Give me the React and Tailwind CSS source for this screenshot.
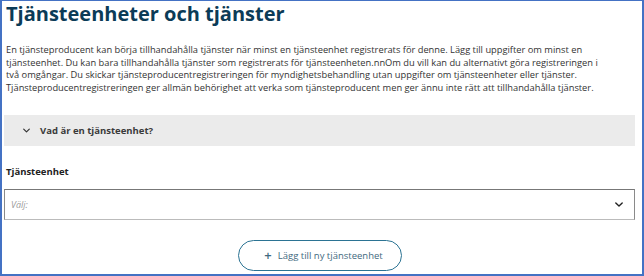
import React from "react";

function ChevronDown({ className, w = 1.4 }) {
  return (
    <svg className={className} viewBox="0 0 10 6" fill="none">
      <path d="M1 1l4 4 4-4" stroke="currentColor" strokeWidth={w} strokeLinecap="round" strokeLinejoin="round" />
    </svg>
  );
}

export default function App() {
  return (
    <div className="w-[644px] h-[276px] bg-white border-[#4472c4] border-l-2 border-r-2 border-t border-b-2 overflow-hidden font-['Open_Sans',sans-serif]">
      <div className="pl-[2px] pr-[7px]">
        <h1 className="pl-[2px] text-[20px] font-bold leading-[26px] text-[#0b3b57]">Tjänsteenheter och tjänster</h1>
        <p className="mt-[17px] pl-[2px] text-[9.3px] leading-[12.6px] text-[#333333] whitespace-nowrap">
          <span className="block">En tjänsteproducent kan börja tillhandahålla tjänster när minst en tjänsteenhet registrerats för denne. Lägg till uppgifter om minst en</span>
          <span className="block">tjänsteenhet. Du kan bara tillhandahålla tjänster som registrerats för tjänsteenheten.nnOm du vill kan du alternativt göra registreringen i</span>
          <span className="block">två omgångar. Du skickar tjänsteproducentregistreringen för myndighetsbehandling utan uppgifter om tjänsteenheter eller tjänster.</span>
          <span className="block">Tjänsteproducentregistreringen ger allmän behörighet att verka som tjänsteproducent men ger ännu inte rätt att tillhandahålla tjänster.</span>
        </p>
        <div className="mt-[21px] h-[31px] bg-[#ebebeb] flex items-center pl-[19px]">
          <ChevronDown className="w-[7px] h-[5px] text-[#333]" w={1.7} />
          <span className="ml-[10px] text-[9.5px] font-bold text-[#3a3a3a]">Vad är en tjänsteenhet?</span>
        </div>
        <div className="mt-[20px] pl-[2px] text-[9.5px] leading-[12px] font-bold text-[#222]">Tjänsteenhet</div>
        <div className="mt-[11px] h-[31px] border border-[#8a8a8a] border-t-[#777] border-b-[#bbb] flex items-center justify-between pl-[6px] pr-[11px]">
          <span className="text-[9px] italic text-[#9a9a9a]">Välj:</span>
          <ChevronDown className="w-[8px] h-[5px] text-[#222]" w={1.7} />
        </div>
        <div className="mt-[20px] flex justify-center">
          <button className="w-[164px] h-[31px] rounded-full border-[1.5px] border-[#2b7393] flex items-center justify-center gap-[6px] pl-[8px] text-[#3f6a80] text-[9.5px]">
            <span className="text-[13px] leading-none font-semibold">+</span>
            <span>Lägg till ny tjänsteenhet</span>
          </button>
        </div>
      </div>
    </div>
  );
}
